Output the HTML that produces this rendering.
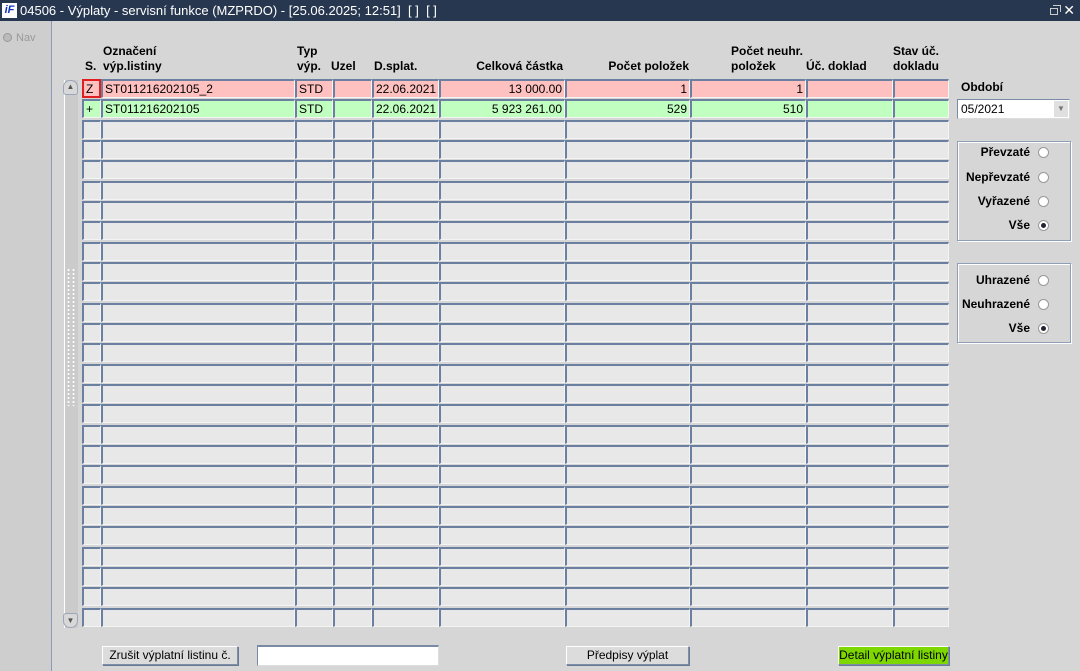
<!DOCTYPE html>
<html><head><meta charset="utf-8"><style>
*{margin:0;padding:0;box-sizing:border-box}
body{width:1080px;height:671px;background:#d6d6d6;font-family:"Liberation Sans",Arial,sans-serif;font-size:12px;color:#000;position:relative;overflow:hidden}
.a{position:absolute}
#title{left:0;top:0;width:1080px;height:21px;background:#283750;color:#fff;font-size:13px;line-height:21px;padding-left:20px}
#logo{left:2px;top:3px;width:15px;height:15px;background:#fff;color:#1030c0;font:bold italic 11px "Liberation Sans",sans-serif;line-height:15px;text-align:center}
#left{left:0;top:21px;width:52px;height:650px;background:#cecece;border-right:1px solid #8a9cb8}
.h{font-weight:bold;font-size:12px;line-height:15px}
.c{position:absolute;height:19px;border-top:2px solid #6b7fa0;border-left:2px solid #6b7fa0;border-right:1px solid #f4f4f4;border-bottom:1px solid #f4f4f4;background:#e8e8e8;font-size:12px;line-height:16px;padding:0 2px;white-space:nowrap;overflow:hidden}
.r{text-align:right}
.p{background:#ffc0c0}.g{background:#c0ffc0}
.box{border:1px solid #8f9fb5;border-right-color:#fff;border-bottom-color:#fff;box-shadow:inset -1px -1px 0 #8f9fb5,inset 1px 1px 0 #fff}
.rad{position:absolute;right:0;font-weight:bold;font-size:12px}
.rb{display:inline-block;width:11px;height:11px;border-radius:50%;background:#fff;border:1px solid #999;vertical-align:-2px;margin-left:8px;margin-right:22px;position:relative}
.rb.on::after{content:"";position:absolute;left:2px;top:2px;width:5px;height:5px;border-radius:50%;background:#223}
.btn{position:absolute;height:19px;border:1px solid #7e8ea8;border-top-color:#fff;border-left-color:#fff;background:#dcdcdc;box-shadow:1px 1px 0 #6a7a95;text-align:center;line-height:17px;font-size:12px}
</style></head><body>
<div id="title" class="a">04506 - Výplaty - servisní funkce (MZPRDO) - [25.06.2025; 12:51]&nbsp; [ ]&nbsp; [ ]</div>
<div id="logo" class="a">iF</div>
<div class="a" style="right:22px;top:8px;width:8px;height:7px;border:1px solid #ccc"></div>
<div class="a" style="right:19px;top:5px;width:8px;height:7px;border:1px solid #ccc;border-left:none;border-bottom:none"></div>
<div class="a" style="right:5px;top:1px;color:#fff;font-size:14px;line-height:18px">✕</div>
<div id="left" class="a"></div>
<div class="a" style="left:3px;top:33px;width:9px;height:9px;border-radius:50%;background:#bbb;border:1px solid #999"></div>
<div class="a" style="left:16px;top:32px;color:#999;font-size:11px">Nav</div>
<div class="a" style="left:64px;top:80px;width:14px;height:548px;background:#cbcbcb;border-left:1px solid #fff"></div>
<div class="a" style="left:63px;top:80px;width:15px;height:15px;border:1px solid #9aa6ba;border-radius:7px 7px 3px 3px;background:#d8d8d8;font-size:8px;color:#555;text-align:center;line-height:12px">▲</div>
<div class="a" style="left:63px;top:613px;width:15px;height:15px;border:1px solid #9aa6ba;border-radius:3px 3px 7px 7px;background:#d8d8d8;font-size:8px;color:#555;text-align:center;line-height:14px">▼</div>
<div class="a" style="left:66px;top:268px;width:9px;height:138px;background-image:radial-gradient(#fff 1px,transparent 1.3px);background-size:5px 4px"></div>

<div class="a h" style="left:85px;top:59px">S.</div>
<div class="a h" style="left:103px;top:44px">Označení<br>výp.listiny</div>
<div class="a h" style="left:297px;top:44px">Typ<br>výp.</div>
<div class="a h" style="left:331px;top:59px">Uzel</div>
<div class="a h" style="left:374px;top:59px">D.splat.</div>
<div class="a h" style="left:430px;top:59px;width:133px;text-align:right">Celková částka</div>
<div class="a h" style="left:556px;top:59px;width:133px;text-align:right">Počet položek</div>
<div class="a h" style="left:731px;top:44px">Počet neuhr.<br>položek</div>
<div class="a h" style="left:806px;top:59px">Úč. doklad</div>
<div class="a h" style="left:893px;top:44px">Stav úč.<br>dokladu</div>
<div id="grid"></div>

<div class="a h" style="left:961px;top:80px">Období</div>
<div class="a" style="left:957px;top:99px;width:113px;height:20px;background:#fff;border:1px solid #7a8aa5;border-bottom-color:#ddd;border-right-color:#ddd;line-height:18px;padding-left:3px;font-size:12px">05/2021<div class="a" style="right:1px;top:1px;width:14px;height:16px;background:#e0e0e0;color:#777;font-size:8px;text-align:center;line-height:16px">▼</div></div>
<div class="a box" style="left:957px;top:141px;width:115px;height:101px">
<div class="rad" style="top:3px">Převzaté<span class="rb"></span></div>
<div class="rad" style="top:28px">Nepřevzaté<span class="rb"></span></div>
<div class="rad" style="top:52px">Vyřazené<span class="rb"></span></div>
<div class="rad" style="top:76px">Vše<span class="rb on"></span></div>
</div>
<div class="a box" style="left:957px;top:263px;width:115px;height:81px">
<div class="rad" style="top:9px">Uhrazené<span class="rb"></span></div>
<div class="rad" style="top:33px">Neuhrazené<span class="rb"></span></div>
<div class="rad" style="top:57px">Vše<span class="rb on"></span></div>
</div>

<div class="btn" style="left:102px;top:646px;width:136px">Zrušit výplatní listinu č.</div>
<div class="a" style="left:257px;top:645px;width:182px;height:21px;background:#fff;border:1px solid #7a8aa5;border-bottom-color:#ddd;border-right-color:#ddd;border-top-width:2px"></div>
<div class="btn" style="left:566px;top:646px;width:123px">Předpisy výplat</div>
<div class="btn" style="left:838px;top:646px;width:111px;background:#7ed800">Detail výplatní listiny</div>

<script>
var cols=[[82,19],[101,194],[295,38],[333,39],[372,67],[439,126],[565,125],[690,116],[806,87],[893,56]];
var h='';
for(var i=0;i<27;i++){
 var t=Math.round(79+i*20.33);
 for(var j=0;j<cols.length;j++){
  var cls='c',txt='';
  if(i==0){cls+=' p';txt=['Z','ST011216202105_2','STD','','22.06.2021','13 000.00','1','1','',''][j];}
  if(i==1){cls+=' g';txt=['+','ST011216202105','STD','','22.06.2021','5 923 261.00','529','510','',''][j];}
  if(j>=5&&j<=7)cls+=' r';
  var st='left:'+cols[j][0]+'px;top:'+t+'px;width:'+cols[j][1]+'px;';
  if(i==0&&j==0)st+='border:2px solid #e02020;background:#ffc0c0;';
  h+='<div class="'+cls+'" style="'+st+'">'+txt+'</div>';
 }
}
document.getElementById('grid').innerHTML=h;
</script>
</body></html>
